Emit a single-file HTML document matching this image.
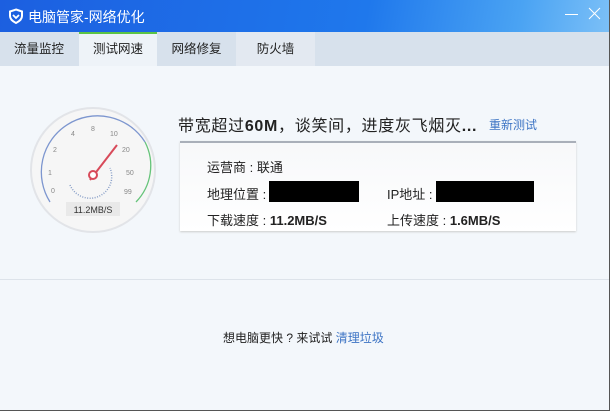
<!DOCTYPE html>
<html><head><meta charset="utf-8"><style>
*{margin:0;padding:0;box-sizing:border-box}
body{width:610px;height:411px;overflow:hidden;font-family:"Liberation Sans","Noto Sans CJK SC",sans-serif;background:#f3f7fb;position:relative}
.title{position:absolute;left:0;top:0;width:610px;height:32px;background:linear-gradient(100deg,#1c5fe0 0%,#1f78ec 60%,#4aa3f3 85%,#7cc0f7 100%)}
.title span{position:absolute;left:28px;top:7px;color:#fff;font-size:14px}
.tabs{position:absolute;left:0;top:32px;width:610px;height:34px;background:#d7e1ec}
.tab{position:absolute;top:0;height:34px;line-height:34px;text-align:center;font-size:12.5px;color:#222}
.bd{position:absolute;right:0;top:0;width:1px;height:411px;background:#555}
.bb{position:absolute;left:0;bottom:0;width:610px;height:1px;background:#555}
</style></head><body>
<div class="title">
<svg style="position:absolute;left:8px;top:8px" width="16" height="16" viewBox="0 0 16 16"><path d="M8 1.5 L14 3.5 V8 C14 11.5 11 13.5 8 15 C5 13.5 2 11.5 2 8 V3.5 Z" fill="none" stroke="#fff" stroke-width="2"/><path d="M5 7 L8 10 L11 7" fill="none" stroke="#fff" stroke-width="1.8"/></svg>
<span>电脑管家-网络优化</span>
<div style="position:absolute;left:565px;top:14px;width:13px;height:1px;background:#fff"></div>
<svg style="position:absolute;left:588px;top:7px" width="13" height="13"><path d="M1 1L12 12M12 1L1 12" stroke="#fff" stroke-width="1"/></svg>
</div>
<div class="tabs">
<div class="tab" style="left:0;width:78px;background:#d7e1ec">流量监控</div>
<div class="tab" style="left:79px;width:78px;background:#eef3f8;border-top:2px solid #5cc445;line-height:31px">测试网速</div>
<div class="tab" style="left:157px;width:79px;background:#d7e1ec">网络修复</div>
<div class="tab" style="left:236px;width:79px;background:#e3e9f1">防火墙</div>
</div>
<svg style="position:absolute;left:28px;top:106px" width="130" height="130" viewBox="0 0 130 130">
<circle cx="65" cy="64" r="62" fill="#f6f6f6" stroke="#e2e4e8" stroke-width="2"/>
<path d="M22 96 A52 52 0 0 1 117 36" fill="none" stroke="#7d96cf" stroke-width="1.3"/>
<path d="M117 36 A52 52 0 0 1 108 96" fill="none" stroke="#66c47a" stroke-width="1.3"/>
<g font-size="7" fill="#888" font-family="Liberation Sans"><text x="23" y="87">0</text><text x="20" y="69">1</text><text x="25" y="46">2</text><text x="43" y="30">4</text><text x="63" y="25">8</text><text x="82" y="30">10</text><text x="94" y="46">20</text><text x="98" y="69">50</text><text x="96" y="88">99</text></g>
<path d="M42 79 A20 20 0 1 0 82 62" fill="none" stroke="#8aa0c8" stroke-width="1.5" stroke-dasharray="1 1.5"/>
<line x1="62" y1="74" x2="89" y2="39" stroke="#d84a5a" stroke-width="2"/>
<circle cx="65" cy="69" r="4" fill="#fff" stroke="#d84a5a" stroke-width="2"/>
<rect x="38" y="96" width="54" height="14" fill="#e9e9e9"/>
<text x="65" y="107" font-size="9" fill="#333" text-anchor="middle" font-family="Liberation Sans">11.2MB/S</text>
</svg>
<div style="position:absolute;left:178px;top:112px;font-size:16px;color:#222;letter-spacing:0.7px;white-space:nowrap">带宽超过<b>60M</b>，谈笑间，进度灰飞烟灭<b>...</b></div>
<div style="position:absolute;left:489px;top:116px;font-size:12px;color:#3d74c4">重新测试</div>
<div style="position:absolute;left:180px;top:141px;width:396px;height:90px;background:linear-gradient(#f7f8fa,#fff);border-top:2px solid #a9afb9;box-shadow:0 1px 2px #ccc"></div>
<div style="position:absolute;left:207px;top:157px;font-size:13px;color:#222">运营商 : 联通</div>
<div style="position:absolute;left:207px;top:184px;font-size:13px;color:#222">地理位置 :</div>
<div style="position:absolute;left:269px;top:181px;width:90px;height:21px;background:#000"></div>
<div style="position:absolute;left:387px;top:184px;font-size:13px;color:#222">IP地址 :</div>
<div style="position:absolute;left:436px;top:181px;width:98px;height:21px;background:#000"></div>
<div style="position:absolute;left:207px;top:210px;font-size:13px;color:#222">下载速度 : <b>11.2MB/S</b></div>
<div style="position:absolute;left:387px;top:210px;font-size:13px;color:#222">上传速度 : <b>1.6MB/S</b></div>
<div style="position:absolute;left:0;top:279px;width:610px;height:1px;background:#dde3ea"></div>
<div style="position:absolute;left:223px;top:329px;font-size:12px;color:#222;white-space:nowrap">想电脑更快 ? 来试试 <span style="color:#3d74c4">清理垃圾</span></div>
<div class="bd"></div><div class="bb"></div>
</body></html>
